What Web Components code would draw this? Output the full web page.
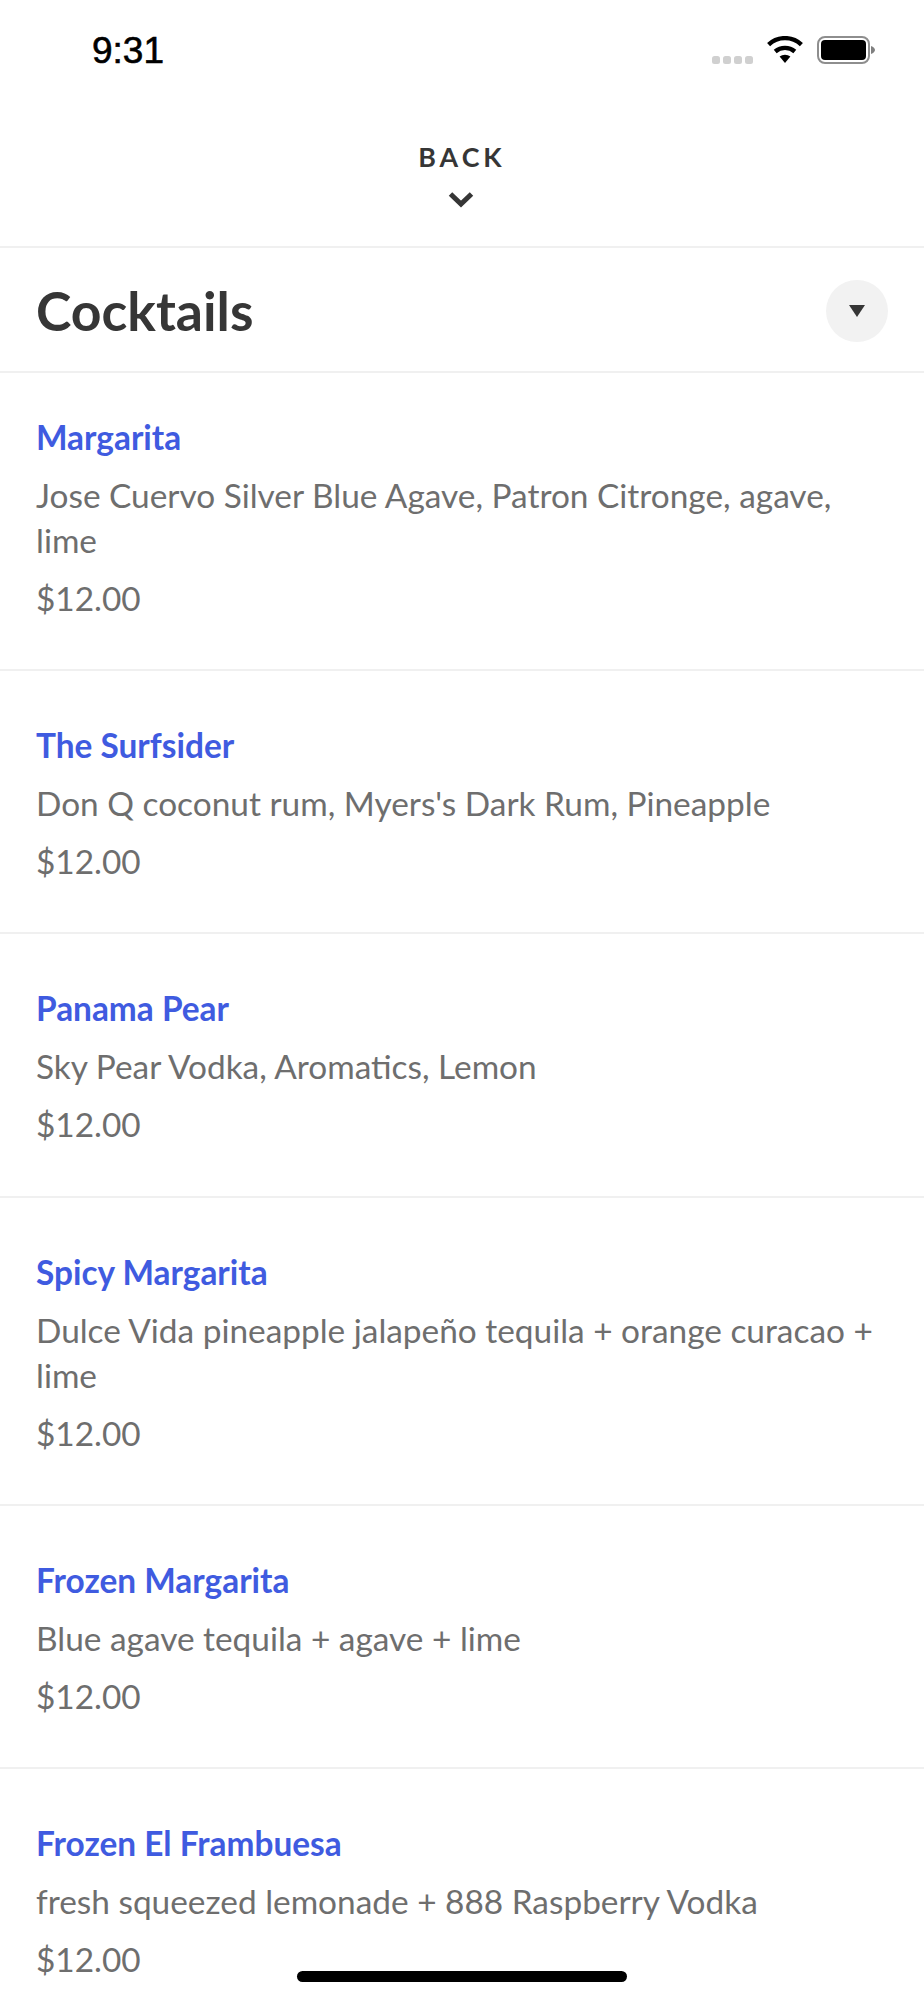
<!DOCTYPE html>
<html>
<head>
<meta charset="utf-8">
<style>
    html, body { margin: 0; padding: 0; background: #fff; }
    body { height: 2000px; overflow: hidden; position: relative; font-family: Lato, sans-serif; }
</style>
</head>
<body>
<status-bar time="9:31"></status-bar>
<back-bar>BACK</back-bar>
<section-head>Cocktails</section-head>
<menu-item name="Margarita" price="$12.00">Jose Cuervo Silver Blue Agave, Patron Citronge, agave, lime</menu-item>
<menu-item name="The Surfsider" price="$12.00">Don Q coconut rum, Myers's Dark Rum, Pineapple</menu-item>
<menu-item name="Panama Pear" price="$12.00">Sky Pear Vodka, Aromatics, Lemon</menu-item>
<menu-item name="Spicy Margarita" price="$12.00">Dulce Vida pineapple jalapeño tequila + orange curacao + lime</menu-item>
<menu-item name="Frozen Margarita" price="$12.00">Blue agave tequila + agave + lime</menu-item>
<menu-item name="Frozen El Frambuesa" price="$12.00">fresh squeezed lemonade + 888 Raspberry Vodka</menu-item>
<home-indicator></home-indicator>

<script>
(function () {

    class StatusBar extends HTMLElement {
        constructor() {
            super();
            this.attachShadow({ mode: 'open' }).innerHTML = `
                <style>
                    :host { display: flex; align-items: center; height: 100px; padding: 0 49px 0 92px; box-sizing: border-box; }
                    .time { font: 400 37px/40px "Liberation Sans", sans-serif; color: #000; -webkit-text-stroke: 0.6px #000; margin-top: 2px; flex: 1; }
                    .icons { display: flex; align-items: flex-start; height: 28px; }
                    .dots { display: flex; gap: 3px; margin: 20px 14px 0 0; }
                    .dots i { width: 8px; height: 8px; border-radius: 2.5px; background: #d0d0d0; }
                    svg { display: block; }
                </style>
                <div class="time"></div>
                <div class="icons">
                    <div class="dots"><i></i><i></i><i></i><i></i></div>
                    <svg width="36" height="27" viewBox="0 0 36 27" style="margin-right:14px">
                        <path d="M18 27 L12.6 20.6 A8.4 8.4 0 0 1 23.4 20.6 Z" fill="#000"/>
                        <path d="M8.2 15.5 A15 15 0 0 1 27.8 15.5" fill="none" stroke="#000" stroke-width="4.4"/>
                        <path d="M1.6 8.6 A24 24 0 0 1 34.4 8.6" fill="none" stroke="#000" stroke-width="4.4"/>
                    </svg>
                    <svg width="58" height="28" viewBox="0 0 58 28">
                        <rect x="1" y="1" width="51" height="26" rx="7" fill="none" stroke="#8e8e8e" stroke-width="2"/>
                        <rect x="4" y="4" width="45" height="20" rx="4" fill="#000"/>
                        <path d="M54 10 C56.500 11 58 12.500 58 14 C58 15.500 56.500 17 54 18 Z" fill="#808080"/>
                    </svg>
                </div>`;
            this.shadowRoot.querySelector('.time').textContent = this.getAttribute('time');
        }
    }

    class BackBar extends HTMLElement {
        constructor() {
            super();
            this.attachShadow({ mode: 'open' }).innerHTML = `
                <style>
                    :host { display: flex; flex-direction: column; align-items: center; height: 148px; padding-top: 42px; box-sizing: border-box; border-bottom: 2px solid #f0f0f0; }
                    .label { font: 700 26.800px/30px Lato, sans-serif; letter-spacing: 4px; color: #363636; }
                    svg { display: block; margin: 19px 2px 0 0; }
                </style>
                <div class="label"><slot></slot></div>
                <svg width="26" height="17" viewBox="0 0 26 17">
                    <path d="M2.500 3 L13 13 L23.500 3" fill="none" stroke="#363636" stroke-width="5"/>
                </svg>`;
        }
    }

    class SectionHead extends HTMLElement {
        constructor() {
            super();
            this.attachShadow({ mode: 'open' }).innerHTML = `
                <style>
                    :host { display: flex; align-items: center; justify-content: space-between; height: 125px; padding: 0 36px 0 36px; box-sizing: border-box; border-bottom: 2px solid #f0f0f0; }
                    .title { font: 700 53.500px/60px Lato, sans-serif; color: #363636; }
                    .toggle { width: 62px; height: 62px; margin-top: 2px; border-radius: 50%; background: #f2f2f2; display: flex; align-items: center; justify-content: center; }
                    svg { display: block; }
                </style>
                <div class="title"><slot></slot></div>
                <div class="toggle">
                    <svg width="16" height="12" viewBox="0 0 16 12"><path d="M0 0 H16 L8 12 Z" fill="#363636"/></svg>
                </div>`;
        }
    }

    class MenuItem extends HTMLElement {
        constructor() {
            super();
            this.attachShadow({ mode: 'open' }).innerHTML = `
                <style>
                    :host { display: block; padding: 54px 36px 48.200px; border-bottom: 2px solid #f0f0f0; }
                    :host(:first-of-type) { padding-top: 44px; }
                    .name { font: 700 33.400px/40px Lato, sans-serif; color: #3f5be0; margin-bottom: 16px; }
                    .desc { font: 400 33.400px/45px Lato, sans-serif; color: #6e6e6e; margin-bottom: 13px; }
                    .price { font: 400 33.400px/45px Lato, sans-serif; color: #6e6e6e; }
                </style>
                <div class="name"></div>
                <div class="desc"><slot></slot></div>
                <div class="price"></div>`;
            this.shadowRoot.querySelector('.name').textContent = this.getAttribute('name');
            this.shadowRoot.querySelector('.price').textContent = this.getAttribute('price');
        }
    }

    class HomeIndicator extends HTMLElement {
        constructor() {
            super();
            this.attachShadow({ mode: 'open' }).innerHTML = `
                <style>
                    :host { display: block; position: absolute; left: 297px; top: 1971px; width: 330px; height: 11px; border-radius: 6px; background: #000; }
                </style>`;
        }
    }

    customElements.define('status-bar', StatusBar);
    customElements.define('back-bar', BackBar);
    customElements.define('section-head', SectionHead);
    customElements.define('menu-item', MenuItem);
    customElements.define('home-indicator', HomeIndicator);

})();
</script>
</body>
</html>
